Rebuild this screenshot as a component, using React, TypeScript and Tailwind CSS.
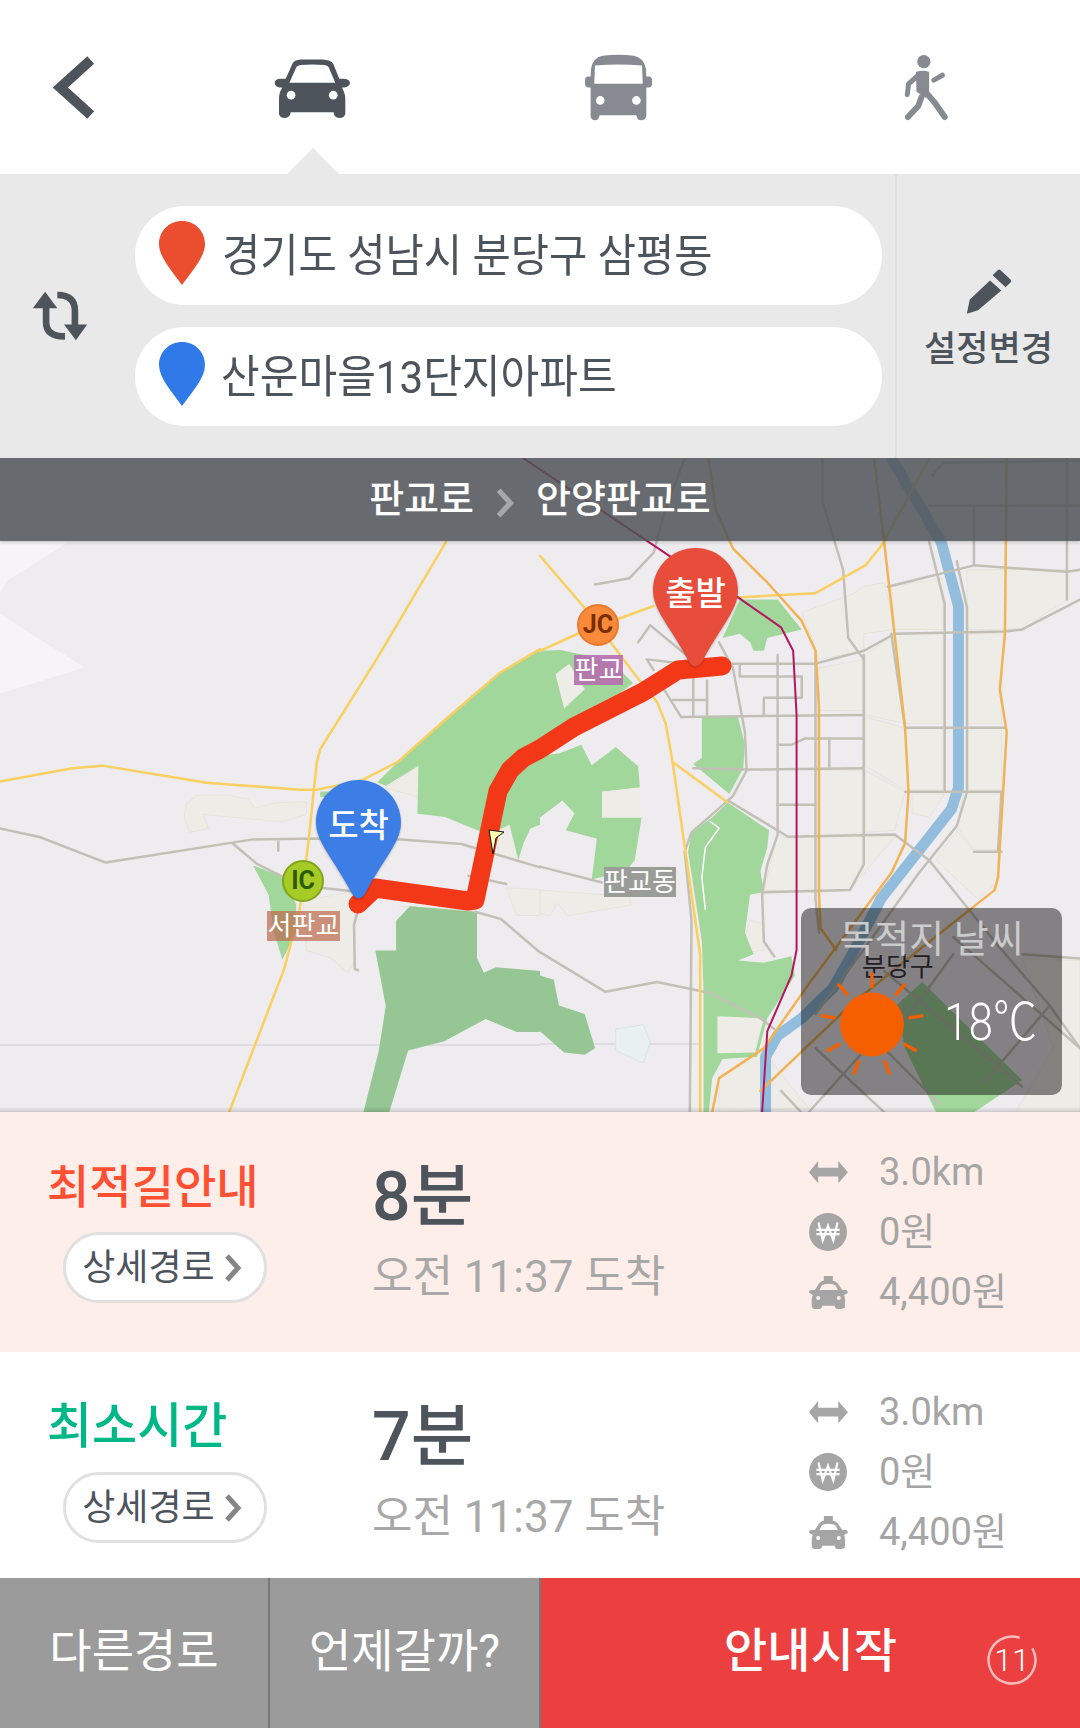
import React from 'react';

const DARK = '#4d545c';

// map shapes are traced from two crops, so each list has its own transform below
const leftBuildings = [
  '540,715 570,690 660,690 720,700 740,725 800,710 890,708 890,742 820,762 590,742 605,780 550,790 535,750',
  '880,975 1030,950 1030,1140 1010,1170 960,1130 890,1110',
  '1120,670 1215,610 1215,695',
  '1470,940 1568,945 1568,1015 1500,1015',
  '1430,790 1480,770 1505,865 1450,850',
  '1160,990 1360,1000 1200,1000',
];
const leftGreens = [
  '1095,655 1155,600 1300,480 1450,360 1568,295 1568,770 1540,780 1520,820 1505,865 1480,770 1430,790 1400,790 1290,748 1212,740 1215,610 1120,665',
  '735,880 820,910 860,985 860,1060 820,1135 795,1060 780,960',
  '930,680 960,680 960,695 930,695',
];
const leftForest = '1055,1548 1100,1380 1120,1260 1090,1110 1150,1110 1150,1030 1190,990 1385,1005 1385,1130 1405,1170 1440,1155 1568,1165 1568,1330 1500,1330 1410,1295 1290,1355 1185,1380 1130,1548';
const leftRoads = [
  '0,780 115,803 307,872 730,810 920,807 1165,810 1340,822 1568,885',
  '675,820 745,875 820,910',
  '930,940 1030,950',
  '808,815 808,840',
  '1040,1000 1028,1040 1030,1160 1040,1163',
  '1360,908 1470,930',
  '1380,1005 1455,1025 1568,1115',
];
const leftYellow = [
  '0,653 210,617 297,610 600,656 870,675 920,675 1050,650 1155,600 1300,480 1450,360 1568,295',
  '665,1548 825,1160 870,1000 895,820 920,600 930,565 1095,320 1295,5',
];

const rightBuildings = [
  '760,380 900,340 940,320 1000,310 1030,420 940,430 940,470 810,490 790,440',
  '1020,320 1170,300 1170,420 1030,420',
  '1240,280 1530,280 1530,350 1400,420 1240,420',
  '810,510 940,490 940,610 810,610',
  '945,480 1030,430 1060,640 945,620',
  '1030,430 1170,430 1170,640 1060,640',
  '1240,430 1345,430 1340,640 1240,640',
  '945,625 1060,650 1070,800 945,740',
  '1060,650 1170,650 1170,795 1070,795',
  '1240,650 1340,650 1340,795 1240,795',
  '810,750 940,750 940,895 810,905',
  '945,750 1060,800 1030,890 945,895',
  '1080,805 1175,805 1130,860 1080,850',
  '1230,805 1340,805 1330,935 1260,935 1210,880',
  '650,1030 690,900 720,910 800,905 800,1035',
  '810,905 1030,905 900,1030 810,1035',
  '1150,960 1210,890 1260,940 1330,940 1330,1010 1270,1050',
  '580,1180 610,1100 650,1110 650,1170',
  '520,1470 640,1400 780,1540 520,1550',
  '1400,1190 1568,1195 1568,1550 1380,1550 1490,1400',
  '0,1030 260,1045 265,1065 80,1090 50,1060 30,1090 0,1085',
];
const rightGreens = [
  '0,470 60,468 130,480 220,505 270,545 200,590 100,640 0,690',
  '0,715 55,710 120,690 150,738 220,695 285,740 290,790 180,800 180,860 295,860 275,960 250,985 150,1005 165,910 75,890 100,850 65,820 0,860',
  '545,825 665,890 660,930 640,985 650,1035 610,1040 595,1130 620,1180 575,1195 650,1200 730,1185 740,1230 660,1330 560,1320 475,1270 470,1150 430,940 440,895 500,860',
  '475,1270 660,1330 630,1420 530,1425 500,1470 490,1550 475,1550',
  '470,625 575,625 595,690 590,745 550,805 445,735 470,720',
  '530,440 580,350 690,350 760,420 660,440 650,470 620,470 610,450 580,430',
  '1110,1245 1400,1475 1260,1550 1150,1550 1060,1400 1035,1300',
];
const rightPatches = ['45,525 85,500 130,560 70,605', '180,800 290,790 295,860 180,860', '515,1325 650,1330 625,1410 515,1412'];
const rightRoads = [
  '160,315 260,300 330,240 360,150 420,20',
  '285,450 320,410 440,490 420,500 310,490 330,515',
  '545,500 690,500 800,500 940,470 1030,430 1350,425 1400,420 1568,350',
  '360,560 410,625 940,620',
  '445,530 445,620', '485,540 485,620', '385,585 485,585',
  '650,620 650,580 760,580 760,530 580,530 580,505',
  '690,480 690,900 660,970 645,1040 650,1150 680,1185',
  '800,480 800,1050 810,1130',
  '940,480 940,970 900,1030 650,1035',
  '520,450 560,510 595,660 600,750 560,810 440,895 420,940 440,1100 435,1550',
  '445,745 600,748 940,745',
  '690,690 730,690 770,675 940,675',
  '840,680 840,745', '690,830 800,830',
  '545,820 720,905 1030,900 1130,960 1330,1160 1480,1300 1568,1400',
  '820,20 820,120 880,280 895,440 940,490',
  '1010,320 1260,270 1530,285 1568,280',
  '1130,215 1175,360 1175,800',
  '1210,260 1240,370 1240,800 1210,880 1100,990 930,1180 800,1320',
  '1020,430 1060,650 1350,650', '1060,800 1340,800', '1260,940 1340,940', '1340,800 1330,940',
  '1530,20 1530,350', '1260,130 1260,270', '1130,130 1568,130', '1140,60 1170,30 1568,25',
  '0,975 180,1012', '0,1175 190,1268 340,1245 490,1270 640,1330 680,1355',
  '700,1500 780,1568', '800,1400 1000,1550', '900,1320 1160,1530', '1000,1220 1400,1490', '1200,1140 1568,1400',
  '1480,1300 1290,1480', '1200,1180 1000,1400', '1060,1300 780,1550', '1400,1180 1568,1190',
];
const rightYellow = [
  '1130,20 995,220 945,270 800,335 575,345',
  '0,248 125,365 280,530 340,590 365,640 385,730 465,1180 465,1550',
  '0,470 110,430 330,365',
  '385,730 545,825',
];
const rightOrange = [
  '490,20 510,140 560,230 660,310 760,400 800,470 810,600 810,1040 815,1120 860,1170',
  '970,20 1000,220 1060,650 1070,800 1060,920 1020,990 900,1120 780,1250 650,1400 520,1470 500,1550',
  '1355,20 1350,430 1335,560 1355,660 1330,1000 1320,1030 1100,1170 900,1300 640,1500',
];

const Line = ({ pts, c, w }: { pts: string; c: string; w: number }) => (
  <polyline points={pts} fill="none" stroke={c} strokeWidth={w} strokeLinejoin="round" strokeLinecap="round" vectorEffect="non-scaling-stroke" />
);

const MapDrawing = () => (
  <svg viewBox="0 458 1080 654" className="absolute inset-0 h-full w-full">
    <rect x="0" y="458" width="1080" height="654" fill="#efecf0" />
    <g transform="translate(0 540) scale(.3444 .3699)">
      <polygon points="0,145 20,110 200,5 0,5" fill="#f7f4f8" />
      <polygon points="0,200 245,345 0,415" fill="#f7f4f8" />
      <line x1="0" y1="1365" x2="1568" y2="1365" stroke="#dedce0" strokeWidth="2" vectorEffect="non-scaling-stroke" />
      {leftBuildings.map((p) => <polygon key={p} points={p} fill="#eeece6" stroke="#e6e4da" strokeWidth="1" vectorEffect="non-scaling-stroke" />)}
      {leftGreens.map((p) => <polygon key={p} points={p} fill="#a2d79c" />)}
      <polygon points={leftForest} fill="#95c694" />
      {leftRoads.map((p) => <Line key={p} pts={p} c="#c2c0b6" w={2.5} />)}
      {leftYellow.map((p) => <Line key={p} pts={p} c="#f9d05f" w={2.5} />)}
    </g>
    <g transform="translate(540 450) scale(.3444 .4273)">
      <line x1="0" y1="1390" x2="470" y2="1390" stroke="#dedce0" strokeWidth="2" vectorEffect="non-scaling-stroke" />
      <polygon points="0,1230 40,1240 55,1300 130,1320 160,1400 130,1415 70,1410 0,1360" fill="#95c694" />
      <polygon points="220,1355 300,1345 320,1385 300,1435 220,1405" fill="#e8f0f0" stroke="#d8e4e4" strokeWidth="1" vectorEffect="non-scaling-stroke" />
      {rightBuildings.map((p) => <polygon key={p} points={p} fill="#eeece6" stroke="#e6e4da" strokeWidth="1" vectorEffect="non-scaling-stroke" />)}
      {rightGreens.map((p) => <polygon key={p} points={p} fill="#a2d79c" />)}
      {rightPatches.map((p) => <polygon key={p} points={p} fill="#eeece6" />)}
      <Line pts="495,870 520,885 480,930 470,1000 480,1075" c="#ffffff" w={1.5} />
      <Line pts="1020,20 1165,215 1215,365 1215,790 1195,840 990,1050 900,1190 850,1260 760,1330 690,1370 655,1420 655,1550" c="#93bddd" w={11} />
      {rightRoads.map((p) => <Line key={p} pts={p} c="#c2c0b6" w={2.5} />)}
      {rightYellow.map((p) => <Line key={p} pts={p} c="#f9d05f" w={2.5} />)}
      {rightOrange.map((p) => <Line key={p} pts={p} c="#f2b356" w={2.5} />)}
      <Line pts="-49,19 380,250 575,345 700,415 735,470 745,620 745,1170 730,1230 660,1360 645,1550" c="#b2185f" w={2} />
    </g>
    <polyline
      points="358,904 375,888 468,901 475,900 498,791 510,770 523,758 540,749 574,727 643,692 678,670 722,666"
      fill="none"
      stroke="#f33817"
      strokeWidth="19"
      strokeLinecap="round"
      strokeLinejoin="round"
    />
    <polygon points="489,830 504,832 496,838 493,854" fill="#fdfdb0" stroke="#111" strokeWidth="1" />
  </svg>
);

const BigPin = ({ label, color, className }: { label: string; color: string; className: string }) => (
  <div className={`absolute h-[121px] w-[85px] ${className}`}>
    <svg viewBox="0 0 85 121" className="absolute inset-0 h-full w-full drop-shadow-[0_1px_1px_rgba(0,0,0,0.25)]">
      <path d="M42.5 0C66 0 85 19 85 42.5C85 62 68 78 50 112Q42.5 125 35 112C17 78 0 62 0 42.5C0 19 19 0 42.5 0Z" fill={color} />
    </svg>
    <span className="absolute left-0 top-[21px] w-full text-center text-[33px] leading-[50px] font-medium text-white">{label}</span>
  </div>
);

const Badge = ({ label, bg, text, className }: { label: string; bg: string; text: string; className: string }) => (
  <div className={`absolute flex h-[42px] w-[42px] items-center justify-center rounded-full border-2 text-[25px] font-bold ${bg} ${text} ${className}`}>{label}</div>
);

const MapLabel = ({ label, className }: { label: string; className: string }) => (
  <span className={`absolute flex h-[30px] items-center justify-center text-[26px] leading-none text-white ${className}`}>{label}</span>
);

const CarIcon = () => (
  <svg viewBox="735 80 230 185" className="h-[62px] w-[77px]">
    <path d="M790 100Q795 88 815 87L880 87Q905 88 912 100L930 145L945 145Q960 146 962 157Q960 170 945 171L938 171Q948 190 948 205L948 250Q945 262 930 262Q915 262 913 245L785 245Q782 262 768 262Q752 262 750 250L750 205Q750 185 760 171L752 171Q738 170 737 157Q738 146 752 145L770 145Z" fill={DARK} />
    <path d="M802 110Q805 105 815 104Q850 100 885 104Q895 105 898 110L918 157L781 157Z" fill="#fff" />
    <circle cx="786" cy="194" r="13" fill="#fff" />
    <circle cx="912" cy="194" r="13" fill="#fff" />
  </svg>
);

const BusIcon = () => (
  <svg viewBox="75 70 208 202" className="h-[67px] w-[69px]">
    <path d="M130 75Q180 70 225 75Q255 80 262 115L263 138L272 138Q280 140 280 150L280 162Q280 170 270 171L263 171L263 258Q260 270 247 270Q235 270 233 255L122 255Q120 270 108 270Q97 270 95 258L95 171L87 171Q78 170 78 160L78 148Q78 140 87 138L95 138L96 115Q102 80 130 75Z" fill="#878a90" />
    <path d="M108 105Q180 98 250 105L252 160L106 160Z" fill="#fff" />
    <circle cx="124" cy="210" r="13" fill="#fff" />
    <circle cx="233" cy="210" r="13" fill="#fff" />
  </svg>
);

const WalkIcon = () => (
  <svg viewBox="1030 68 140 202" className="h-[67px] w-[47px]">
    <g fill="none" stroke="#878a90" strokeLinecap="round" strokeLinejoin="round">
      <path d="M1072 135L1046 158L1042 190" strokeWidth="15" />
      <path d="M1122 147L1148 132" strokeWidth="15" />
      <path d="M1085 198L1075 225L1044 258" strokeWidth="18" />
      <path d="M1095 180L1125 215L1155 258" strokeWidth="18" />
    </g>
    <circle cx="1092" cy="91" r="20" fill="#878a90" />
    <path d="M1068 122Q1090 115 1108 122L1108 185L1098 200L1070 182Z" fill="#878a90" />
  </svg>
);

const SwapIcon = () => (
  <svg viewBox="30 265 180 160" className="h-[53px] w-[60px]">
    <g fill="none" stroke={DARK} strokeWidth="20">
      <path d="M78 320L78 365Q78 408 135 408" />
      <path d="M112 283Q165 283 165 330L165 375" />
    </g>
    <path d="M75 273L112 323L38 323Z" fill={DARK} />
    <path d="M168 420L132 372L202 372Z" fill={DARK} />
  </svg>
);

const PencilIcon = () => (
  <svg viewBox="220 50 150 145" className="h-[48px] w-[50px]">
    <path d="M298 88L332 118L262 178L228 188L237 145Z" fill={DARK} />
    <path d="M322 56Q326 53 330 57L360 85Q364 90 360 94L345 108L306 72Z" fill={DARK} />
  </svg>
);

const SmallPin = ({ color }: { color: string }) => (
  <svg viewBox="0 0 46 64" className="h-[64px] w-[46px] shrink-0">
    <path d="M23 0C36 0 46 10 46 23C46 36 33 50 23 64C13 50 0 36 0 23C0 10 10 0 23 0Z" fill={color} />
  </svg>
);

const Chevron = ({ className, color }: { className: string; color: string }) => (
  <svg viewBox="0 0 18 30" className={className}>
    <path d="M3 3L14 15L3 27" fill="none" stroke={color} strokeWidth="5" />
  </svg>
);

const DistanceIcon = () => (
  <svg viewBox="55 60 125 75" className="h-[26px] w-[42px]">
    <path d="M58 98L85 65L85 85L145 85L145 65L174 98L145 131L145 111L85 111L85 131Z" fill="#a5a5a5" />
  </svg>
);

const WonIcon = () => (
  <svg viewBox="0 0 36 36" className="h-[38px] w-[38px]">
    <circle cx="18" cy="18" r="18" fill="#a5a5a5" />
    <path d="M9 9L13 26L18 12L23 26L27 9M7 16H29M7 20H29" fill="none" stroke="#fff" strokeWidth="2" />
  </svg>
);

const TaxiIcon = ({ tint }: { tint: string }) => (
  <svg viewBox="58 405 122 105" className="h-[35px] w-[41px]">
    <path d="M105 408H132V422Q145 424 152 438L160 450H172Q178 452 176 460L166 464Q170 475 168 502Q166 508 150 507Q138 508 138 497H100Q100 508 85 507Q70 508 69 500Q67 475 72 464L62 460Q58 452 66 450H78L86 438Q92 424 105 422Z" fill="#a5a5a5" />
    <path d="M92 450L99 436Q104 431 118 431Q135 431 140 436L147 450Z" fill={tint} />
    <circle cx="88" cy="474" r="6" fill={tint} />
    <circle cx="150" cy="474" r="6" fill={tint} />
  </svg>
);

const sunRays = [
  '250,215 250,262', '320,285 350,250', '360,352 405,345', '345,430 385,452', '287,480 303,522',
  '210,480 195,522', '155,430 113,453', '140,352 95,345', '178,285 148,250',
];

const SunIcon = () => (
  <svg viewBox="85 205 330 325" className="h-[108px] w-[110px]">
    {sunRays.map((p) => <polyline key={p} points={p} stroke="#f55f00" strokeWidth="10" fill="none" />)}
    <circle cx="250" cy="372" r="96" fill="#f55f00" />
  </svg>
);

type RouteInfo = {
  title: string;
  titleClass: string;
  minutes: string;
  rowClass: string;
  tint: string;
};

const RouteCard = ({ title, titleClass, minutes, rowClass, tint }: RouteInfo) => (
  <div className={`flex ${rowClass}`}>
    <div className="w-[372px] shrink-0 pl-[47px] pt-[45px]">
      <div className={`leading-[60px] font-medium ${titleClass}`}>{title}</div>
      <button className="ml-[16px] mt-[15px] flex h-[71px] w-[204px] items-center justify-center gap-[9px] rounded-full border-[3px] border-[#e0e0e0] bg-white pr-[6px] text-[36px] text-[#4d545c]">
        상세경로
        <Chevron className="h-[30px] w-[18px]" color="#858585" />
      </button>
    </div>
    <div className="w-[436px] shrink-0 pt-[45px]">
      <div className="text-[68px] leading-[80px] font-medium text-[#4d545c]">{minutes}분</div>
      <div className="mt-[15px] text-[44px] leading-[50px] text-[#a8a8a8]">오전 11:37 도착</div>
    </div>
    <div className="flex flex-col pt-[30px] text-[38px] leading-[60px] text-[#a5a5a5]">
      <div className="flex h-[60px] items-center"><span className="flex w-[71px]"><DistanceIcon /></span>3.0km</div>
      <div className="flex h-[60px] items-center"><span className="flex w-[71px] pl-[1px]"><WonIcon /></span>0원</div>
      <div className="flex h-[60px] items-center"><span className="flex w-[71px]"><TaxiIcon tint={tint} /></span>4,400원</div>
    </div>
  </div>
);

export default function App() {
  return (
    <div className="flex h-[1728px] w-[1080px] flex-col overflow-hidden bg-white font-['Roboto','Noto_Sans_CJK_KR',sans-serif] text-[#4d545c]">
      {/* transport tabs */}
      <div className="relative flex h-[174px] shrink-0 items-start pt-[54px]">
        <svg viewBox="0 0 50 70" className="ml-[53px] mt-[-1px] h-[69px] w-[46px]">
          <path d="M41 5L8 35L41 65" fill="none" stroke={DARK} strokeWidth="11" strokeLinejoin="miter" />
        </svg>
        <div className="ml-[175px] mt-[3px]"><CarIcon /></div>
        <div className="ml-[233px]"><BusIcon /></div>
        <div className="ml-[250px]"><WalkIcon /></div>
        <div className="absolute bottom-0 left-[287px] h-0 w-0 border-x-[26px] border-b-[26px] border-x-transparent border-b-[#e9e9e9]" />
      </div>

      {/* origin / destination */}
      <div className="flex h-[284px] shrink-0 bg-[#e9e9e9]">
        <div className="flex w-[135px] shrink-0 items-center pb-[2px] pl-[30px]"><SwapIcon /></div>
        <div className="flex w-[747px] shrink-0 flex-col gap-[22px] pt-[32px]">
          <div className="flex h-[99px] items-center gap-[17px] rounded-full bg-white pb-[5px] pl-[24px] text-[45px]">
            <SmallPin color="#eb4d2f" />
            <span className="inline-block origin-left scale-x-[.925] pt-[7px]">경기도 성남시 분당구 삼평동</span>
          </div>
          <div className="flex h-[99px] items-center gap-[16px] rounded-full bg-white pb-[5px] pl-[24px] text-[45px]">
            <SmallPin color="#2f7ae8" />
            <span className="inline-block origin-left scale-x-[.935] pt-[7px]">산운마을13단지아파트</span>
          </div>
        </div>
        <div className="ml-[13px] flex flex-1 flex-col items-center border-l-2 border-[#e0e0e0] pt-[94px]">
          <PencilIcon />
          <span className="mt-[9px] text-[35px] leading-[50px] font-medium">설정변경</span>
        </div>
      </div>

      {/* map */}
      <div className="relative h-[654px] shrink-0 overflow-hidden">
        <MapDrawing />
        <div className="absolute inset-x-0 top-0 flex h-[83px] items-center justify-center gap-[20px] bg-[#4f5358]/85 text-[38px] font-medium text-white shadow-[0_2px_3px_rgba(0,0,0,0.15)]">
          <span>판교로</span>
          <Chevron className="mt-[6px] h-[32px] w-[22px]" color="#a5a7aa" />
          <span>안양판교로</span>
        </div>
        <MapLabel label="판교" className="left-[574px] top-[197px] w-[49px] bg-[#b56fae]/90" />
        <MapLabel label="판교동" className="left-[604px] top-[409px] w-[72px] bg-[#9a9c98]" />
        <MapLabel label="서판교" className="left-[267px] top-[453px] w-[73px] bg-[#bb6a4c]/70" />
        <Badge label="JC" bg="bg-[#f98a3c]" text="text-[#7a2f00]" className="left-[577px] top-[146px] border-[#e9792c]" />
        <Badge label="IC" bg="bg-[#a6cb25]" text="text-[#2c5a00]" className="left-[282px] top-[402px] border-[#7fa51c]" />
        <BigPin label="출발" color="#e84c3a" className="left-[653px] top-[90px]" />
        <BigPin label="도착" color="#3c7de6" className="left-[316px] top-[322px]" />
        <span className="absolute left-[862px] top-[494px] text-[26px] leading-[30px] text-[#3f3a44] [text-shadow:0_0_2px_rgba(255,255,255,0.6)]">분당구</span>

        {/* weather */}
        <div className="absolute left-[801px] top-[450px] h-[187px] w-[261px] rounded-[10px] bg-black/45">
          <div className="pt-[8px] text-center text-[38px] leading-[46px] text-[#cbcbcb]">목적지 날씨</div>
          <div className="flex items-center pl-[16px] pt-[7px]">
            <SunIcon />
            <span className="ml-[17px] inline-block origin-left scale-x-[.85] text-[52px] leading-none font-light text-white">18℃</span>
          </div>
        </div>
        <div className="absolute inset-x-0 bottom-0 h-[5px] bg-gradient-to-b from-transparent to-black/15" />
      </div>

      <RouteCard title="최적길안내" titleClass="text-[46px] text-[#ff5033]" minutes="8" rowClass="h-[240px] bg-[#fdeeea]" tint="#fdeeea" />
      <RouteCard title="최소시간" titleClass="text-[49px] text-[#00b887]" minutes="7" rowClass="h-[226px] bg-white" tint="#ffffff" />

      {/* bottom actions */}
      <div className="flex h-[150px] shrink-0 text-[46px] text-white">
        <div className="flex w-[270px] items-center justify-center border-r-2 border-[#777] bg-[#9b9b9b] pb-[4px]">다른경로</div>
        <div className="flex w-[271px] items-center justify-center border-r-2 border-[#777] bg-[#9b9b9b] pb-[4px]">언제갈까?</div>
        <div className="relative flex flex-1 items-center justify-center bg-[#ec3f3f] pb-[4px] text-[47px] font-medium">
          안내시작
          <div className="absolute left-[446px] top-[57px] flex h-[50px] w-[50px] items-center justify-center text-[32px] font-light">
            <svg viewBox="0 0 50 50" className="absolute inset-0">
              <circle cx="25" cy="25" r="23.5" fill="none" stroke="#fff" strokeOpacity=".65" strokeWidth="2.5" strokeDasharray="130 18" transform="rotate(-30 25 25)" />
            </svg>
            11
          </div>
        </div>
      </div>
    </div>
  );
}
